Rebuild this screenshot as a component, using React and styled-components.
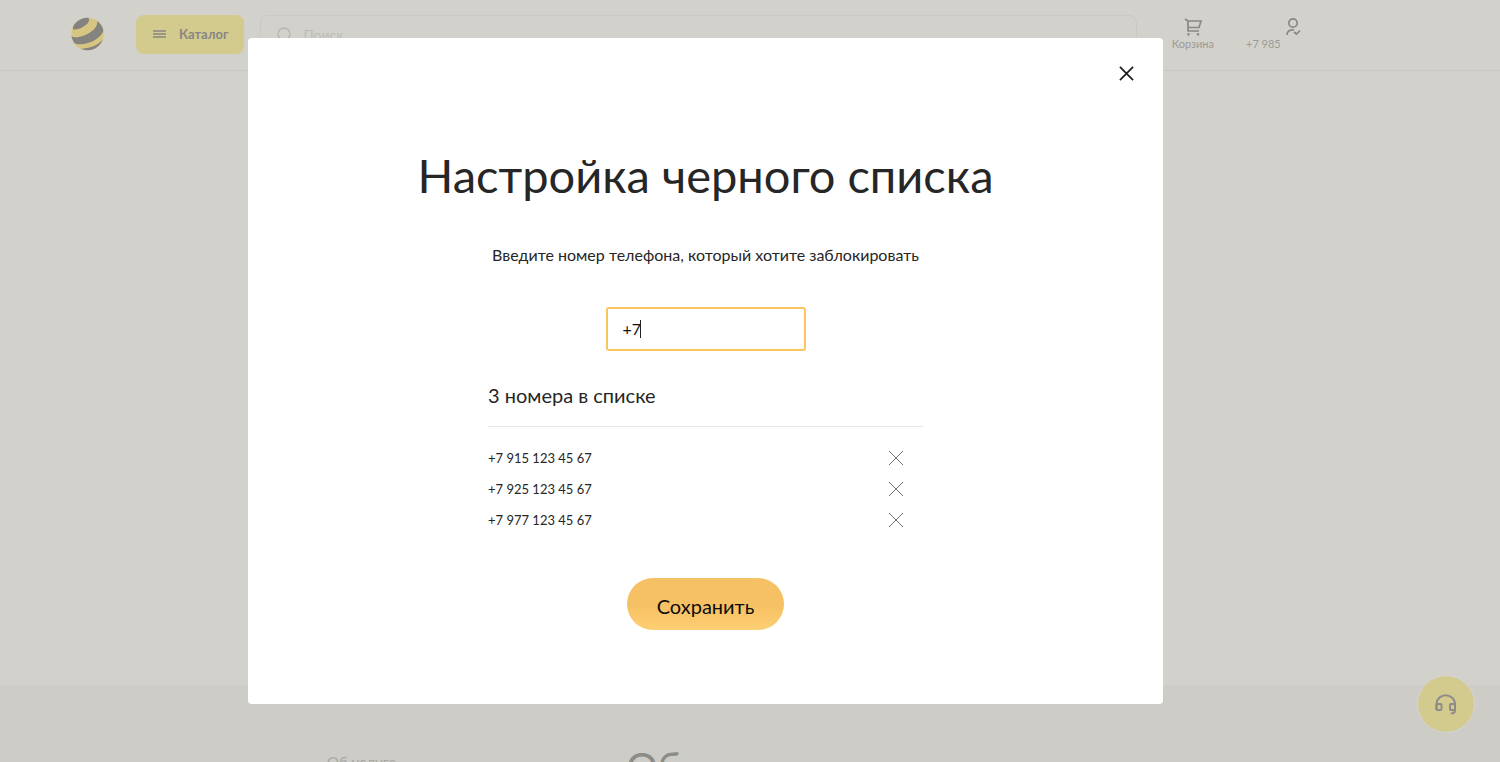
import React, { useState } from "react";
import styled, { createGlobalStyle } from "styled-components";

const GlobalStyle = createGlobalStyle`
    *{
        box-sizing: border-box;
    }
    body{
        margin: 0;
        background-color: #d2d1cc;
        color: #262626;
        font-family: Lato, Roboto, "Liberation Sans", sans-serif;
    }
    button, input{
        font-family: inherit;
    }
    button{
        border: none;
        padding: 0;
        cursor: pointer;
    }
    h1, h2, p, ul{
        margin: 0;
        padding: 0;
        font-weight: 400;
    }
`

const Page = styled.div`
    display: flex;
    flex-direction: column;
    height: 100vh;
    overflow: hidden;
`

const Header = styled.header`
    display: flex;
    align-items: center;
    height: 71px;
    padding: 0 199px 2px 71px;
    border-bottom: 1px solid #c9c8c3;
`

const Logo = styled.a`
    display: flex;
    margin-right: 32px;
`

const CatalogButton = styled.button`
    display: flex;
    align-items: center;
    gap: 12px;
    height: 39px;
    padding: 0 16px;
    margin-right: 16px;
    border-radius: 8px;
    background-color: #d3ca8e;
    color: #888683;
    font-size: 13px;
    font-weight: 700;
`

const Search = styled.label`
    display: flex;
    align-items: center;
    flex: 1;
    gap: 12px;
    height: 39px;
    padding: 0 16px;
    border: 1px solid #cac9c4;
    border-radius: 8px;
    input{
        flex: 1;
        min-width: 0;
        border: none;
        padding: 0;
        outline: none;
        background: none;
        font-size: 14px;
        &::placeholder{
            color: #bdbcb7;
        }
    }
`

const HeaderLink = styled.a`
    display: flex;
    flex-direction: column;
    align-items: ${({ $end }) => $end ? "flex-end" : "center"};
    min-width: ${({ $end }) => $end ? "55px" : "0"};
    margin-left: ${({ $end }) => $end ? "32px" : "35px"};
    color: #8a8885;
    font-size: 11px;
    line-height: 16px;
    text-decoration: none;
    span{
        align-self: flex-start;
        color: #9c9a97;
    }
`

const Main = styled.main`
    flex: 1;
`

const About = styled.section`
    display: flex;
    height: 77px;
    padding: 66px 327px 0;
    background-color: #cdccc7;
    p{
        width: 299px;
        color: #a9a8a4;
        font-size: 15px;
        line-height: 22px;
    }
    h2{
        color: #8c8b87;
        font-size: 40px;
        line-height: 32px;
        white-space: nowrap;
    }
`

const SupportButton = styled.button`
    position: fixed;
    right: 25px;
    bottom: 29px;
    display: flex;
    align-items: center;
    justify-content: center;
    width: 58px;
    height: 58px;
    border: 1px solid #d5d3ce;
    border-radius: 50%;
    background-color: #d3ca8e;
    background-clip: padding-box;
    color: #8e8c89;
`

const Overlay = styled.div`
    position: fixed;
    inset: 0;
    padding: 38px 337px 58px 248px;
`

const Dialog = styled.div`
    display: flex;
    flex-direction: column;
    align-items: center;
    padding-bottom: 74px;
    border-radius: 4px;
    background-color: #fff;
`

const CloseButton = styled.button`
    display: flex;
    align-self: flex-end;
    margin: 28px 29px 62px 0;
    background: none;
    color: #1c1c1c;
`

const Title = styled.h1`
    font-size: 47px;
    line-height: 64px;
`

const Hint = styled.label`
    margin-top: 36px;
    font-size: 16px;
    line-height: 24px;
`

const Field = styled.div`
    position: relative;
    margin-top: 40px;
    input{
        display: block;
        width: 200px;
        height: 44px;
        padding: 0 15px 2px;
        border: 2px solid #fac55f;
        border-radius: 3px;
        outline: none;
        color: #111;
        font-size: 16px;
        caret-color: transparent;
    }
`

const Caret = styled.span`
    position: absolute;
    top: 13px;
    left: 34px;
    width: 1px;
    height: 18px;
    background-color: #222;
`

const ListBlock = styled.section`
    width: 100%;
    max-width: 435px;
    margin-top: 31px;
    h2{
        padding-bottom: 17px;
        border-bottom: 1px solid #e6e6e6;
        font-size: 20px;
        line-height: 27px;
    }
    ul{
        margin-top: 15px;
        list-style: none;
    }
`

const NumberRow = styled.li`
    display: flex;
    align-items: center;
    justify-content: space-between;
    height: 31px;
    padding-right: 19px;
    font-size: 13px;
    button{
        display: flex;
        background: none;
        color: #707070;
    }
`

const SaveButton = styled.button`
    height: 52px;
    margin-top: 43px;
    padding: 3px 30px 0;
    border-radius: 26px;
    background: linear-gradient(#f6c064 50%, #fdcf72);
    color: #0d0d0d;
    font-size: 20px;
`

const Cross = ({ size, width }) => (
    <svg width={size} height={size} viewBox="0 0 16 16" fill="none" stroke="currentColor" strokeWidth={width}>
        <path d="M1 1L15 15M15 1L1 15" />
    </svg>
)

const LogoIcon = () => (
    <svg width="33" height="34" viewBox="0 0 33 34">
        <clipPath id="ball"><circle cx="16.5" cy="17" r="16.3" /></clipPath>
        <g clipPath="url(#ball)">
            <rect width="33" height="34" fill="#d6c681" />
            <path d="M2 12C1 6 8 0 17 0C20 4 16 8 10 11C6 12.500 3 13 2 12Z" fill="#858380" />
            <path d="M26 3C28 10 20 16 13 18.500C8 20.500 3 21 0 19L3 26C8 28.500 18 27 24 23C30 19 33 15 33 10L28 2Z" fill="#858380" />
            <path d="M33 21C28 28 20 31.500 7 32L12 35L26 34L34 25Z" fill="#858380" />
        </g>
    </svg>
)

const numbers = ["+7 915 123 45 67", "+7 925 123 45 67", "+7 977 123 45 67"]

const App = () => {

    const [phone, setPhone] = useState("+7")

    return (
        <>
            <GlobalStyle />
            <Page>
                <Header>
                    <Logo href="#" aria-label="Главная"><LogoIcon /></Logo>
                    <CatalogButton>
                        <svg width="15" height="12" viewBox="0 0 15 12" stroke="currentColor" strokeWidth="1.5">
                            <path d="M1 3H14M1 6H14M1 9H14" />
                        </svg>
                        Каталог
                    </CatalogButton>
                    <Search>
                        <svg width="14" height="16" viewBox="0 0 14 16" fill="none" stroke="#b5b4af" strokeWidth="1.3">
                            <circle cx="7" cy="8" r="6" />
                            <path d="M11 12L14 16" />
                        </svg>
                        <input type="search" placeholder="Поиск" aria-label="Поиск" />
                    </Search>
                    <HeaderLink href="#">
                        <svg width="20" height="20" viewBox="0 0 20 20" fill="none" stroke="currentColor" strokeWidth="1.7">
                            <path d="M2 3L5 5V15H16M5 5H18L16 11.500H5" />
                            <circle cx="5.500" cy="18.300" r="0.5" />
                            <circle cx="15" cy="18.300" r="0.5" />
                        </svg>
                        <span>Корзина</span>
                    </HeaderLink>
                    <HeaderLink href="#" $end>
                        <svg width="16" height="20" viewBox="0 0 16 20" fill="none" stroke="currentColor" strokeWidth="1.7">
                            <circle cx="8" cy="7" r="4.2" />
                            <path d="M2 19C2 15.500 4.500 13.500 9 14M9 16L11.500 18L15 14.500" />
                        </svg>
                        <span>+7 985</span>
                    </HeaderLink>
                </Header>
                <Main />
                <About>
                    <p>Об услуге</p>
                    <h2>Об</h2>
                </About>
            </Page>
            <SupportButton aria-label="Поддержка">
                <svg width="22" height="22" viewBox="0 0 22 22" fill="none" stroke="currentColor" strokeWidth="2">
                    <path d="M1.500 17V10.500A9.300 9.300 0 0 1 20 10.500V17Q20 20.500 16 20.500" />
                    <rect x="1.500" y="11" width="5" height="6" rx="1" />
                    <rect x="15" y="11" width="5" height="6" rx="1" />
                </svg>
            </SupportButton>
            <Overlay>
                <Dialog role="dialog" aria-labelledby="title">
                    <CloseButton aria-label="Закрыть"><Cross size={15} width={1.800} /></CloseButton>
                    <Title id="title">Настройка черного списка</Title>
                    <Hint htmlFor="phone">Введите номер телефона, который хотите заблокировать</Hint>
                    <Field>
                        <input id="phone" type="tel" value={phone} onChange={(e) => setPhone(e.target.value)} />
                        <Caret />
                    </Field>
                    <ListBlock>
                        <h2>3 номера в списке</h2>
                        <ul>
                            {
                                numbers.map((number) => (
                                    <NumberRow key={number}>
                                        {number}
                                        <button aria-label={`Удалить ${number}`}><Cross size={16} width={1} /></button>
                                    </NumberRow>
                                ))
                            }
                        </ul>
                    </ListBlock>
                    <SaveButton>Сохранить</SaveButton>
                </Dialog>
            </Overlay>
        </>
    )
}

export default App
